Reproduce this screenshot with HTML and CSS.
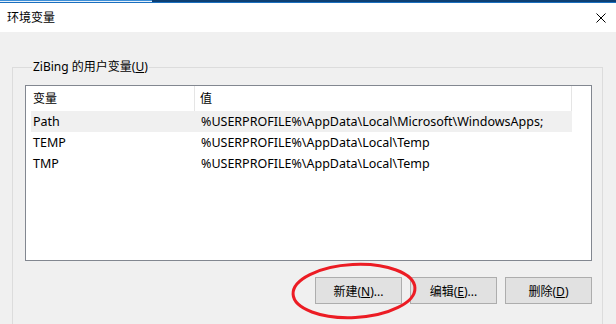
FILE: index.html
```html
<!DOCTYPE html>
<html lang="zh-CN">
<head>
    <meta charset="UTF-8">
    <title>环境变量</title>
    <link rel="stylesheet" href="styles.css">
</head>
<body>
    <div class="window">
        <div class="top-strip"><span class="strip-light"></span><span class="strip-dark"></span></div>
        <div class="titlebar">
            <span class="title">环境变量</span>
            <svg class="close" width="10" height="10" viewBox="0 0 10 10">
                <path d="M0.5 0.5 L9.5 9.5 M9.5 0.5 L0.5 9.5" stroke="#000" stroke-width="1" fill="none"/>
            </svg>
        </div>
        <div class="content">
            <fieldset class="group">
                <legend>ZiBing 的用户变量(<u>U</u>)</legend>
                <div class="listview">
                    <div class="list-header">
                        <div class="col-name">变量</div>
                        <div class="col-value">值</div>
                    </div>
                    <div class="row selected">
                        <div class="col-name">Path</div>
                        <div class="col-value">%USERPROFILE%\AppData\Local\Microsoft\WindowsApps;</div>
                    </div>
                    <div class="row">
                        <div class="col-name">TEMP</div>
                        <div class="col-value">%USERPROFILE%\AppData\Local\Temp</div>
                    </div>
                    <div class="row">
                        <div class="col-name">TMP</div>
                        <div class="col-value">%USERPROFILE%\AppData\Local\Temp</div>
                    </div>
                </div>
                <div class="buttons">
                    <button class="btn">新建(<u>N</u>)...</button>
                    <button class="btn">编辑(<u>E</u>)...</button>
                    <button class="btn">删除(<u>D</u>)</button>
                </div>
            </fieldset>
        </div>
        <svg class="highlight" width="616" height="324" viewBox="0 0 616 324">
            <ellipse cx="354" cy="291" rx="61" ry="26.5" transform="rotate(-3 354 291)" fill="none" stroke="#ec1c24" stroke-width="3"/>
        </svg>
    </div>
</body>
</html>
```

FILE: styles.css
```css
body {
    margin: 0;
    font-family: "Noto Sans", "Noto Sans CJK SC", sans-serif;
    font-size: 12px;
    color: #000;
    background: #f0f0f0;
}
.window {
    position: relative;
    width: 616px;
    height: 324px;
    overflow: hidden;
    background: #f0f0f0;
}
.top-strip {
    display: flex;
    height: 3px;
}
.strip-light {
    width: 152px;
    background: linear-gradient(#3d8fd8 0, #3d8fd8 1px, #e8f1fa 1px, #e8f1fa 2px, #1a6fbf 2px);
}
.strip-dark {
    flex: 1;
    background: linear-gradient(#0d3f73 0, #0d3f73 2px, #1a6fbf 2px);
}
.titlebar {
    height: 29px;
    background: #fff;
    display: flex;
    align-items: center;
    justify-content: space-between;
    padding: 0 10px 0 7px;
}
.title {
    font-size: 12px;
    line-height: 16px;
}
.close {
    display: block;
}
.content {
    padding: 27px 13px 0 12px;
}
.group {
    margin: 0;
    border: 1px solid #dcdcdc;
    padding: 10px 10px 20px 12px;
    min-inline-size: 0;
}
.group legend {
    margin-left: 7px;
    padding: 0 1px;
    line-height: 16px;
}
.listview {
    height: 174px;
    border: 1px solid #828790;
    background: #fff;
}
.list-header {
    display: flex;
    height: 25px;
    align-items: center;
}
.list-header .col-name {
    width: 161px;
    padding-left: 7px;
    border-right: 1px solid #e5e5e5;
    height: 25px;
    line-height: 25px;
}
.list-header .col-value {
    width: 371px;
    padding-left: 5px;
    border-right: 1px solid #e5e5e5;
    height: 25px;
    line-height: 25px;
}
.row {
    display: flex;
    height: 21px;
    line-height: 21px;
    margin-left: 5px;
    width: 541px;
    font-size: 12.5px;
    white-space: nowrap;
}
.row.selected {
    background: #f0f0f0;
}
.row .col-name {
    width: 168px;
    padding-left: 2px;
}
.row .col-value {
    flex: 1;
}
.buttons {
    display: flex;
    justify-content: flex-end;
    gap: 8px;
    margin-top: 16px;
}
.btn {
    width: 87px;
    height: 27px;
    padding: 0;
    background: #e1e1e1;
    border: 1px solid #adadad;
    font-family: "Noto Sans", "Noto Sans CJK SC", sans-serif;
    font-size: 12px;
    color: #000;
}
.highlight {
    position: absolute;
    left: 0;
    top: 0;
    pointer-events: none;
}
```
